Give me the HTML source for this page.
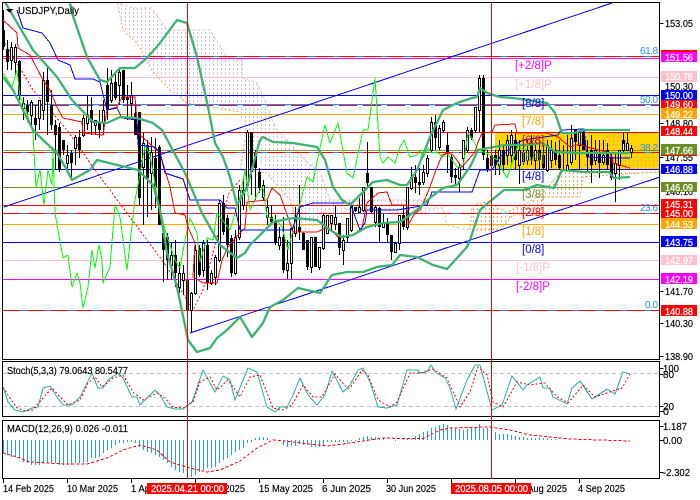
<!DOCTYPE html>
<html><head><meta charset="utf-8"><style>
html,body{margin:0;padding:0;background:#fff}
svg{display:block;font-family:"Liberation Sans",sans-serif}
text{font-size:10px;fill:#000;stroke:#000;stroke-width:.15}
.s text{fill:#fff;stroke:#fff;stroke-width:.25}
.g text{font-size:11.5px;stroke:none}
</style></head><body>
<svg width="700" height="500" viewBox="0 0 700 500" shape-rendering="crispEdges" xmlns="http://www.w3.org/2000/svg">
<defs>
<pattern id="pc" width="4" height="4" patternUnits="userSpaceOnUse"><rect x="1" y="0" width="1" height="2" fill="#D8BFD8"/></pattern>
<pattern id="ps" width="4" height="4" patternUnits="userSpaceOnUse"><rect x="1" y="0" width="1" height="2" fill="#F4A460"/></pattern>
<clipPath id="m"><rect x="3" y="3" width="656" height="357"/></clipPath>
</defs>
<rect width="700" height="500" fill="#fff"/>
<g clip-path="url(#m)">
<rect x="495" y="132" width="165" height="37" fill="#FFD700"/>
<!-- cloud -->
<path d="M118 3L133 8H152L167 30H210L227 57H242V78L257 83L265 100L275 127L308 163L320 172L330 200H423L437 208H443L447 225L440 208L423 215L350 215L300 233L290 200L275 183L267 173L245 140L240 112L187 103L170 90L153 72L137 43L123 30Z" fill="url(#pc)"/>
<path d="M118 3V7L123 30L137 43L153 72L170 90L187 103L240 112" fill="none" stroke="#F4A460" stroke-dasharray="2 2"/>
<path d="M245 140L240 170L267 173L275 183L290 200L300 233" fill="none" stroke="#F4A460" stroke-dasharray="2 2"/>
<path d="M80 3H118L133 8H152L167 30H210L227 57H242V78L257 83L265 100L275 127L308 163L320 172L330 200H423L437 208H443L447 225L467 230L472 222" fill="none" stroke="#D8BFD8" stroke-dasharray="3 2"/>
<path d="M470 230L472 206L480 203L487 202L507 212L527 203L543 193L560 172L580 170L607 137L618 133L630 147H660V172L610 175L583 177L580 197H543V215H513L500 230Z" fill="url(#ps)"/>
<path d="M470 230L472 206L480 203L487 202L507 212L527 203L543 193L560 172L580 170L607 137L618 133L630 147H660M660 172L610 175L583 177L580 197H543V215H513L500 230H470" fill="none" stroke="#F4A460" stroke-dasharray="2 2"/>
<!-- horizontal levels -->
<g fill="none">
<path d="M3 56.5H659" stroke="#1E90FF"/><path d="M3 56.5H659" stroke="#f00" stroke-dasharray="18 6"/>
<path d="M3 58.5H659" stroke="#f0f"/>
<path d="M3 77.5H659" stroke="#FFC0CB"/>
<path d="M3 95.5H659" stroke="#00f"/>
<path d="M3 104.5H659" stroke="#1E90FF"/><path d="M3 105.5H659" stroke="#f00" stroke-dasharray="18 6"/>
<path d="M3 114.5H659" stroke="#FFA500"/>
<path d="M3 132.5H659" stroke="#f00"/>
<path d="M3 150.5H659" stroke="#808000" stroke-opacity=".8"/>
<path d="M3 152.5H659" stroke="#1E90FF"/><path d="M3 152.5H659" stroke="#f00" stroke-dasharray="18 6"/>
<path d="M3 169.5H659" stroke="#00f"/>
<path d="M3 187.5H659" stroke="#6B8E23"/>
<path d="M3 205.5H659" stroke="#f00"/>
<path d="M3 213.5H659" stroke="#1E90FF"/><path d="M3 213.5H659" stroke="#f00" stroke-dasharray="18 6"/>
<path d="M3 224.5H659" stroke="#FFA500"/>
<path d="M3 242.5H659" stroke="#00f"/>
<path d="M3 260.5H659" stroke="#FFC0CB"/>
<path d="M3 279.5H659" stroke="#f0f"/>
<path d="M3 310.5H659" stroke="#1E90FF"/><path d="M3 310.5H659" stroke="#f00" stroke-dasharray="18 6"/>
</g>
<!-- channel -->
<path d="M4 207L612 3M190 333L660 177" stroke="#00f" fill="none"/>
<path d="M3 40L17 63L33 90L67 130L95 170L167 267L193 310L203 290L229 193L240 180" stroke="#f00" fill="none" stroke-dasharray="2 2"/>
<!-- wicks -->
<path stroke="#000" stroke-width="1" fill="none" d="M3.5 10V50M7.5 40V70M11.5 42V70M15.5 44V75M19.5 60V100M23.5 97V120M27.5 100V122M31.5 100V128M35.5 105V140M39.5 100V130M43.5 72V120M47.5 65V135M51.5 90V130M55.5 120V170M59.5 123V172M63.5 140V155M67.5 145V170M71.5 150V180M75.5 135V165M79.5 130V158M83.5 115V137M87.5 95V130M91.5 97V135M95.5 120V135M99.5 110V138M103.5 100V135M107.5 68V120M111.5 70V103M115.5 72V100M119.5 68V105M123.5 70V103M127.5 85V120M131.5 82V120M135.5 105V135M139.5 112V205M143.5 133V225M147.5 140V217M151.5 137V210M155.5 138V208M159.5 145V225M163.5 226V282M167.5 233V280M171.5 243V280M175.5 240V287M179.5 262V293M183.5 265V295M187.5 275V310M191.5 292V333M195.5 245V295M199.5 245V277M203.5 240V277M207.5 240V290M211.5 270V285M215.5 255V285M219.5 200V262M223.5 195V235M227.5 215V257M231.5 235V277M235.5 230V275M239.5 185V240M243.5 178V210M247.5 130V190M251.5 132V195M255.5 150V200M259.5 168V193M263.5 180V200M267.5 200V225M271.5 205V225M275.5 215V245M279.5 227V250M283.5 217V273M287.5 240V279M291.5 228V280M295.5 207V237M299.5 185V240M303.5 232V250M307.5 240V270M311.5 237V273M315.5 237V267M319.5 247V270M323.5 213V250M327.5 215V233M331.5 215V232M335.5 205V230M339.5 223V255M343.5 235V265M347.5 218V243M351.5 205V232M355.5 207V212M359.5 198V212M363.5 187V212M367.5 142V187M371.5 187V213M375.5 205V227M379.5 207V242M383.5 213V228M387.5 218V243M391.5 235V260M395.5 243V252M399.5 215V250M403.5 205V230M407.5 187V230M411.5 167V190M415.5 165V193M419.5 168V195M423.5 165V185M427.5 155V177M431.5 117V153M435.5 115V150M439.5 125V150M443.5 120V133M447.5 133V173M451.5 155V183M455.5 168V185M459.5 163V192M463.5 140V170M467.5 127V152M471.5 128V140M475.5 107V133M479.5 75V132M483.5 75V160M487.5 150V172M491.5 145V170M495.5 150V175M499.5 140V175M503.5 145V173M507.5 135V165M511.5 130V165M515.5 133V170M519.5 140V184M523.5 140V165M527.5 140V165M531.5 135V165M535.5 140V170M539.5 140V170M543.5 145V170M547.5 140V172M551.5 140V168M555.5 142V165M559.5 140V170M563.5 145V170M567.5 135V170M571.5 125V165M575.5 130V160M579.5 130V170M583.5 130V150M587.5 140V172M591.5 135V183M595.5 140V165M599.5 140V178M603.5 140V165M607.5 143V170M611.5 153V180M615.5 153V202M619.5 150V180M623.5 133V152M627.5 132V150M631.5 145V158"/>
<!-- black bodies -->
<path fill="#000" d="M2 30h3v17h-3zM6 49h3v13h-3zM18 61h3v34h-3zM26 105h3v7h-3zM34 118h3v7h-3zM46 80h3v22h-3zM50 105h3v20h-3zM54 125h3v10h-3zM58 127h3v43h-3zM62 140h3v10h-3zM70 153h3v10h-3zM78 137h3v13h-3zM90 110h3v12h-3zM98 123h3v7h-3zM106 85h3v25h-3zM114 82h3v16h-3zM122 70h3v30h-3zM126 97h3v3h-3zM134 113h3v22h-3zM138 112h3v86h-3zM146 145h3v33h-3zM154 158h3v29h-3zM158 147h3v78h-3zM162 233h3v17h-3zM166 237h3v23h-3zM174 255h3v18h-3zM186 280h3v30h-3zM198 248h3v27h-3zM206 245h3v38h-3zM222 203h3v29h-3zM226 218h3v27h-3zM230 238h3v35h-3zM250 132h3v40h-3zM254 153h3v15h-3zM258 172h3v16h-3zM270 217h3v5h-3zM274 222h3v21h-3zM282 237h3v33h-3zM298 227h3v5h-3zM302 233h3v17h-3zM306 240h3v27h-3zM314 237h3v30h-3zM338 223h3v25h-3zM354 207h3v4h-3zM366 173h3v10h-3zM370 187h3v25h-3zM378 208h3v19h-3zM386 223h3v12h-3zM390 235h3v17h-3zM402 215h3v12h-3zM414 177h3v6h-3zM418 182h3v3h-3zM434 122h3v16h-3zM446 145h3v7h-3zM450 157h3v20h-3zM454 175h3v3h-3zM470 130h3v8h-3zM482 78h3v77h-3zM486 158h3v12h-3zM494 155h3v10h-3zM502 150h3v15h-3zM514 140h3v20h-3zM522 153h3v9h-3zM530 143h3v15h-3zM538 150h3v10h-3zM542 155h3v13h-3zM554 150h3v10h-3zM558 155h3v13h-3zM574 130h3v12h-3zM582 132h3v18h-3zM586 153h3v4h-3zM590 150h3v15h-3zM598 153h3v10h-3zM606 150h3v15h-3zM610 157h3v21h-3zM622 140h3v3h-3z"/>
<!-- white bodies -->
<path fill="#fff" stroke="#000" d="M10.5 47.500h2v13h-2zM14.500 47.500h2v15h-2zM22.500 103.500h2v5h-2zM30.500 102.500h2v13h-2zM38.500 100.500h2v18h-2zM42.500 80.500h2v30h-2zM66.500 155.500h2v8h-2zM74.500 137.500h2v11h-2zM82.500 118.500h2v17h-2zM86.500 115.500h2v8h-2zM94.500 120.500h2v5h-2zM102.500 110.500h2v12h-2zM110.500 83.500h2v17h-2zM118.500 72.500h2v13h-2zM130.500 95.500h2v8h-2zM142.500 143.500h2v24h-2zM150.500 152.500h2v21h-2zM170.500 255.500h2v10h-2zM178.500 273.500h2v14h-2zM182.500 273.500h2v7h-2zM190.500 293.500h2v17h-2zM194.500 250.500h2v43h-2zM202.500 243.500h2v27h-2zM210.500 273.500h2v10h-2zM214.500 257.500h2v20h-2zM218.500 203.500h2v57h-2zM234.500 237.500h2v36h-2zM238.500 190.500h2v47h-2zM242.500 190.500h2v15h-2zM246.500 132.500h2v53h-2zM262.500 185.500h2v12h-2zM266.500 207.500h2v10h-2zM278.500 237.500h2v8h-2zM286.500 263.500h2v7h-2zM290.500 228.500h2v35h-2zM294.500 217.500h2v16h-2zM310.500 237.500h2v30h-2zM318.500 247.500h2v20h-2zM322.500 215.500h2v33h-2zM326.500 215.500h2v18h-2zM330.500 215.500h2v8h-2zM334.500 217.500h2v7h-2zM342.500 240.500h2v10h-2zM346.500 218.500h2v19h-2zM350.500 205.500h2v25h-2zM358.500 207.500h2v5h-2zM362.500 187.500h2v23h-2zM374.500 207.500h2v15h-2zM382.500 222.500h2v5h-2zM394.500 243.500h2v9h-2zM398.500 215.500h2v28h-2zM406.500 187.500h2v40h-2zM410.500 177.500h2v11h-2zM422.500 172.500h2v10h-2zM426.500 158.500h2v15h-2zM430.500 122.500h2v28h-2zM438.500 128.500h2v19h-2zM442.500 122.500h2v8h-2zM458.500 167.500h2v11h-2zM462.500 140.500h2v18h-2zM466.500 130.500h2v20h-2zM474.500 107.500h2v23h-2zM478.500 78.500h2v32h-2zM490.500 155.500h2v10h-2zM498.500 150.500h2v15h-2zM506.500 140.500h2v15h-2zM510.500 135.500h2v20h-2zM518.500 150.500h2v15h-2zM526.500 150.500h2v10h-2zM534.500 150.500h2v10h-2zM546.500 145.500h2v25h-2zM550.500 150.500h2v10h-2zM566.500 165.500h2v5h-2zM570.500 138.500h2v24h-2zM578.500 132.500h2v13h-2zM594.500 150.500h2v10h-2zM602.500 155.500h2v7h-2zM614.500 163.500h2v10h-2zM618.500 150.500h2v15h-2zM622.500 143.500h2v7h-2zM626.500 143.500h2v7h-2zM630.500 148.500h2v4h-2z"/>
<g fill="none" stroke-linejoin="round">
<!-- chikou -->
<polyline stroke="#00ff00" points="3,73 12,87 17,70 20,97 25,107 33,133 35,170 36,187 40,170 44,205 48,170 52,185 53,150 55,213 63,258 68,255 72,287 77,273 80,283 83,308 88,287 92,250 95,268 99,245 102,260 103,283 110,267 115,205 120,217 127,270 130,243 135,200 140,175 145,145 150,155 157,195 165,230 170,245 175,260 180,268 185,240 190,218 197,233 200,262 207,238 213,240 217,213 230,230 240,197 245,170 250,210 258,193 263,187 267,217 277,220 282,227 288,250 293,230 307,177 313,182 318,157 325,125 330,143 338,123 347,173 353,178 363,130 368,130 375,78 380,157 383,163 388,157 395,163 400,147 404,140 410,157 417,155 420,150 423,158 428,148 432,153 437,152 443,157 447,153 457,167 463,167 468,133 473,140 478,150 487,153 497,160 507,178 512,163 517,147 527,150"/>
<!-- tenkan -->
<polyline stroke="#f00" points="3,20 17,33 18,48 30,55 43,80 50,90 57,107 63,118 82,122 83,133 103,135 107,110 117,107 122,97 135,97 138,133 160,153 170,187 175,213 185,215 188,227 195,243 193,277 203,283 217,283 222,260 228,247 238,235 245,228 247,202 267,200 272,188 280,195 290,223 293,232 317,232 328,227 338,237 353,235 362,228 367,203 378,193 387,192 392,205 407,205 408,225 415,213 420,210 428,192 435,173 442,155 448,153 453,155 462,167 475,152 478,142 482,133 492,132 495,125 515,124 517,133 547,133 558,137 570,147 580,144 587,147 610,153 613,163 630,168"/>
<!-- kijun -->
<polyline stroke="#00f" points="17,10 23,28 42,33 50,43 58,60 70,65 75,79 93,79 100,82 107,110 117,108 122,118 137,120 138,145 155,147 160,153 165,173 183,179 190,200 220,200 227,208 235,208 240,230 292,230 300,207 313,203 350,203 360,230 365,223 367,210 397,210 427,205 432,192 472,192 480,170 492,170 500,157 514,145 523,140 558,135 561,130 584,129 587,157 612,158 630,158"/>
<!-- bollinger -->
<g stroke="#3CB371" stroke-width="2.3" shape-rendering="auto">
<polyline points="70,3 72,13 87,57 100,80 107,82 120,68 135,68 147,58 160,43 177,20 187,23 197,57 208,107 215,143 223,157 230,177 237,205 247,187 260,140 263,137 273,142 293,143 317,147 325,160 333,187 342,200 350,205 363,192 373,182 387,180 400,185 407,185 417,170 430,137 443,110 457,103 472,98 477,97 480,88 487,93 500,97 513,98 547,103 555,113 562,133 574,133 584,130 630,130"/>
<polyline points="5,2 33,50 57,77 72,100 93,122 107,123 120,117 137,118 153,123 162,130 185,173 202,213 220,245 237,258 245,253 250,245 273,222 293,218 317,220 330,230 342,237 353,235 367,227 383,223 400,222 417,210 430,198 443,188 457,185 470,167 478,150 504,145 527,145 542,143 556,152 574,153 614,153 630,153"/>
<polyline points="3,77 13,90 33,130 43,140 57,153 67,170 72,180 90,170 97,160 117,165 138,170 153,185 160,210 167,253 177,287 188,340 197,352 210,348 217,338 227,330 240,317 252,337 263,323 270,307 283,300 298,288 320,293 332,275 347,272 363,272 377,267 392,265 400,255 417,257 433,265 447,269 467,247 470,240 480,210 488,203 504,190 524,190 537,185 554,188 562,170 584,172 609,172 614,178 630,177"/>
</g>
</g>
</g>
<!-- panels -->
<g fill="none" stroke="#000">
<rect x="2.5" y="2.5" width="657" height="357"/>
<rect x="2.5" y="361.5" width="657" height="55"/>
<rect x="2.5" y="420.5" width="657" height="58"/>
<path d="M659.5 23.5h4M659.5 123.5h4M659.5 157.5h4M659.5 291.5h4M659.5 323.5h4M659.5 356.5h4M659.5 368.5h4M659.5 374.5h4M659.5 406.5h4M659.5 411.5h4M659.5 426.5h4M659.5 440.5h4M659.5 472.5h4M3.5 479v4M67.5 479v4M131.5 479v4M195.5 479v4M259.5 479v4M323.5 479v4M387.5 479v4M451.5 479v4M515.5 479v4M579.5 479v4"/>
</g>
<!-- stochastic -->
<path d="M3 373.500H659M3 406.500H659" stroke="#c0c0c0" stroke-dasharray="4 3" fill="none"/>
<polyline fill="none" stroke="#20B2AA" points="3,387 8,402 15,410 23,412 32,408 38,407 43,388 50,386 57,397 63,405 72,405 80,397 92,373 98,388 103,388 108,380 118,373 123,378 132,397 137,397 140,405 148,397 155,390 160,395 167,407 175,409 183,409 192,402 203,370 215,392 223,376 230,380 235,400 248,368 257,372 267,407 275,412 280,407 287,407 293,395 300,378 308,395 317,405 325,395 332,371 343,392 350,385 358,370 363,368 370,382 378,407 387,408 397,405 407,370 418,370 420,373 427,372 431,365 435,372 445,378 450,388 456,409 467,380 475,365 480,365 492,410 502,405 512,376 523,390 527,385 540,377 543,388 550,388 553,397 567,404 572,388 580,381 592,399 607,389 615,394 623,372 630,374"/>
<polyline fill="none" stroke="#f00" stroke-dasharray="2 2" points="3,387 10,398 17,408 25,411 33,410 43,398 52,388 60,397 68,405 80,400 88,383 95,377 102,387 113,378 123,375 133,392 143,400 157,393 165,398 172,407 183,408 193,402 200,382 210,377 217,390 228,380 240,397 250,377 260,375 273,408 283,410 292,405 303,385 313,397 322,397 335,374 347,388 350,388 362,370 368,375 378,400 390,407 397,402 410,373 420,373 433,369 447,378 453,392 460,407 470,392 478,367 487,375 493,402 503,407 517,382 530,385 545,383 557,397 568,403 583,385 595,397 610,392 622,388 630,374"/>
<!-- macd -->
<path fill="none" stroke="#1DA6DD" d="M3.500 440V453M7.500 440V455M11.500 440V457M15.500 440V457M19.500 440V458M23.500 440V462M27.500 440V463M31.500 440V465M35.500 440V465M39.500 440V465M43.500 440V463M47.500 440V463M51.500 440V463M55.500 440V463M59.500 440V465M63.500 440V465M67.500 440V465M71.500 440V465M75.500 440V463M79.500 440V463M83.500 440V463M87.500 440V462M91.500 440V458M95.500 440V458M99.500 440V457M103.500 440V453M107.500 440V450M111.500 440V448M115.500 440V445M119.500 440V443M123.500 440V443M127.500 440V442M131.500 440V442M135.500 440V443M139.500 440V447M143.500 440V450M147.500 440V452M151.500 440V453M155.500 440V455M159.500 440V457M163.500 440V460M167.500 440V463M171.500 440V467M175.500 440V470M179.500 440V472M183.500 440V473M191.500 440V477M195.500 440V475M199.500 440V472M203.500 440V470M207.500 440V468M211.500 440V468M215.500 440V467M219.500 440V463M223.500 440V460M227.500 440V458M231.500 440V455M235.500 440V452M239.500 440V450M243.500 440V448M247.500 440V443M251.500 440V442M255.500 440V438M259.500 440V437M263.500 440V437M267.500 440V438M279.500 440V441M283.500 440V445M287.500 440V447M291.500 440V446M295.500 440V446M299.500 440V444M303.500 440V445M307.500 440V445M311.500 440V447M315.500 440V447M319.500 440V447M323.500 440V445M327.500 440V442M331.500 440V442M335.500 440V442M339.500 440V442M343.500 440V442M347.500 440V442M351.500 440V441M355.500 440V441M359.500 440V438M363.500 440V437M367.500 440V436M371.500 440V437M375.500 440V437M379.500 440V438M383.500 440V438M395.500 440V441M403.500 440V439M407.500 440V439M411.500 440V439M415.500 440V436M419.500 440V434M423.500 440V432M427.500 440V431M431.500 440V428M435.500 440V427M439.500 440V425M443.500 440V424M447.500 440V425M451.500 440V427M455.500 440V428M459.500 440V429M463.500 440V430M467.500 440V429M471.500 440V428M475.500 440V427M479.500 440V424M483.500 440V428M487.500 440V428M495.500 440V432M499.500 440V434M503.500 440V434M507.500 440V434M511.500 440V435M515.500 440V436M519.500 440V437M523.500 440V437M527.500 440V438M531.500 440V438M535.500 440V438M539.500 440V438M543.500 440V438M547.500 440V438M551.500 440V439M555.500 440V439"/>
<polyline fill="none" stroke="#f00" stroke-dasharray="3 2" points="3,453 17,457 30,462 47,463 67,464 87,464 107,458 123,450 140,445 157,450 170,462 190,468 207,472 220,470 240,461 257,448 273,440 293,442 310,444 327,446 350,443 363,441 383,438 403,438.500 423,438.500 440,430 450,428 490,427 510,430 530,435 550,437 570,439 630,441"/>
<!-- vertical selection lines -->
<path d="M187.500 3V479M491.500 3V479" stroke="#f00" fill="none"/>
<!-- chart text -->
<path d="M6 9h7l-3.500 4z" fill="#000"/>
<text x="18" y="14" textLength="61" lengthAdjust="spacingAndGlyphs">USDJPY,Daily</text>
<text x="7" y="374" textLength="121" lengthAdjust="spacingAndGlyphs">Stoch(5,3,3) 79.0643 80.5477</text>
<text x="7" y="432" textLength="121" lengthAdjust="spacingAndGlyphs">MACD(12,26,9) 0.026 -0.011</text>
<g class="g">
<text x="515" y="69" style="fill:#f0f">[+2/8]P</text>
<text x="515" y="88" style="fill:#FFC0CB">[+1/8]P</text>
<text x="522" y="107" style="fill:#00f">[8/8]</text>
<text x="522" y="125" style="fill:#FFA500">[7/8]</text>
<text x="522" y="144" style="fill:#f00">[6/8]</text>
<text x="522" y="161" style="fill:#6B8E23">[5/8]</text>
<text x="522" y="180" style="fill:#00f">[4/8]</text>
<text x="522" y="198" style="fill:#6B8E23">[3/8]</text>
<text x="522" y="216" style="fill:#f00">[2/8]</text>
<text x="522" y="235" style="fill:#FFA500">[1/8]</text>
<text x="522" y="253" style="fill:#00f">[0/8]</text>
<text x="516" y="271" style="fill:#FFC0CB">[-1/8]P</text>
<text x="516" y="290" style="fill:#f0f">[-2/8]P</text>
</g>
<g>
<text x="640" y="54" style="fill:#1E90FF;stroke:none" textLength="18">61.8</text>
<text x="640" y="103" style="fill:#1E90FF;stroke:none" textLength="18">50.0</text>
<text x="640" y="151" style="fill:#1E90FF;stroke:none" textLength="18">38.2</text>
<text x="640" y="211" style="fill:#1E90FF;stroke:none" textLength="18">23.6</text>
<text x="645" y="308" style="fill:#1E90FF;stroke:none" textLength="13">0.0</text>
</g>
<!-- right scale plain -->
<text x="665" y="27" textLength="28" lengthAdjust="spacingAndGlyphs">153.05</text>
<text x="665" y="90" textLength="28" lengthAdjust="spacingAndGlyphs">150.30</text>
<text x="665" y="127" textLength="28" lengthAdjust="spacingAndGlyphs">148.80</text>
<text x="665" y="161" textLength="28" lengthAdjust="spacingAndGlyphs">147.55</text>
<text x="665" y="195" textLength="28" lengthAdjust="spacingAndGlyphs">146.10</text>
<text x="665" y="295" textLength="28" lengthAdjust="spacingAndGlyphs">141.70</text>
<text x="665" y="327" textLength="28" lengthAdjust="spacingAndGlyphs">140.30</text>
<text x="665" y="360" textLength="28" lengthAdjust="spacingAndGlyphs">138.90</text>
<text x="663" y="372" textLength="16" lengthAdjust="spacingAndGlyphs">100</text>
<text x="663" y="378" textLength="11" lengthAdjust="spacingAndGlyphs">80</text>
<text x="663" y="410" textLength="11" lengthAdjust="spacingAndGlyphs">20</text>
<text x="663" y="415" textLength="6" lengthAdjust="spacingAndGlyphs">0</text>
<text x="663" y="430" textLength="24" lengthAdjust="spacingAndGlyphs">1.187</text>
<text x="663" y="444" textLength="19" lengthAdjust="spacingAndGlyphs">0.00</text>
<text x="663" y="476" textLength="27" lengthAdjust="spacingAndGlyphs">-2.302</text>
<!-- right scale tags -->
<g class="s">
<rect x="661" y="50" width="36" height="2" fill="#f00"/>
<rect x="661" y="52" width="36" height="10" fill="#f0f"/><text x="665" y="61" textLength="28" lengthAdjust="spacingAndGlyphs">151.56</text>
<rect x="661" y="71" width="36" height="11" fill="#FFC0CB"/><text x="665" y="80" textLength="28" lengthAdjust="spacingAndGlyphs">150.78</text>
<rect x="661" y="90" width="36" height="10" fill="#00f"/><text x="665" y="99" textLength="28" lengthAdjust="spacingAndGlyphs">150.00</text>
<rect x="661" y="100" width="36" height="9" fill="#f00"/><text x="665" y="108" textLength="28" lengthAdjust="spacingAndGlyphs">149.60</text>
<rect x="661" y="108" width="36" height="11" fill="#FFA500"/><text x="665" y="118" textLength="28" lengthAdjust="spacingAndGlyphs">149.22</text>
<rect x="661" y="126" width="36" height="10" fill="#f00"/><text x="665" y="135" textLength="28" lengthAdjust="spacingAndGlyphs">148.44</text>
<rect x="661" y="155" width="36" height="1" fill="#f00"/>
<rect x="661" y="144" width="36" height="11" fill="#6B8E23"/><text x="665" y="154" textLength="28" lengthAdjust="spacingAndGlyphs">147.66</text>
<rect x="661" y="164" width="36" height="10" fill="#00f"/><text x="665" y="173" textLength="28" lengthAdjust="spacingAndGlyphs">146.88</text>
<rect x="661" y="182" width="36" height="10" fill="#6B8E23"/><text x="665" y="191" textLength="28" lengthAdjust="spacingAndGlyphs">146.09</text>
<rect x="661" y="208" width="36" height="10" fill="#f00"/><text x="665" y="217" textLength="28" lengthAdjust="spacingAndGlyphs">145.00</text>
<rect x="661" y="199" width="36" height="10" fill="#f00"/><text x="665" y="208" textLength="28" lengthAdjust="spacingAndGlyphs">145.31</text>
<rect x="661" y="218" width="36" height="11" fill="#FFA500"/><text x="665" y="228" textLength="28" lengthAdjust="spacingAndGlyphs">144.53</text>
<rect x="661" y="236" width="36" height="11" fill="#00f"/><text x="665" y="246" textLength="28" lengthAdjust="spacingAndGlyphs">143.75</text>
<rect x="661" y="255" width="36" height="10" fill="#FFC0CB"/><text x="665" y="264" textLength="28" lengthAdjust="spacingAndGlyphs">142.97</text>
<rect x="661" y="273" width="36" height="11" fill="#f0f"/><text x="665" y="283" textLength="28" lengthAdjust="spacingAndGlyphs">142.19</text>
<rect x="661" y="305" width="36" height="11" fill="#f00"/><text x="665" y="315" textLength="28" lengthAdjust="spacingAndGlyphs">140.88</text>
</g>
<!-- time axis -->
<text x="3" y="492" textLength="51" lengthAdjust="spacingAndGlyphs">14 Feb 2025</text>
<text x="67" y="492" textLength="51" lengthAdjust="spacingAndGlyphs">10 Mar 2025</text>
<text x="131" y="492" textLength="46" lengthAdjust="spacingAndGlyphs">1 Apr 2025</text>
<text x="195" y="492" textLength="50" lengthAdjust="spacingAndGlyphs">23 Apr 2025</text>
<text x="259" y="492" textLength="54" lengthAdjust="spacingAndGlyphs">15 May 2025</text>
<text x="322" y="492" textLength="49" lengthAdjust="spacingAndGlyphs">6 Jun 2025</text>
<text x="386" y="492" textLength="50" lengthAdjust="spacingAndGlyphs">30 Jun 2025</text>
<text x="451" y="492" textLength="50" lengthAdjust="spacingAndGlyphs">22 Jul 2025</text>
<text x="515" y="492" textLength="52" lengthAdjust="spacingAndGlyphs">13 Aug 2025</text>
<text x="578" y="492" textLength="47" lengthAdjust="spacingAndGlyphs">4 Sep 2025</text>
<g class="s">
<rect x="147" y="483" width="80" height="11" fill="#f00"/><text x="151" y="492" textLength="73" lengthAdjust="spacingAndGlyphs">2025.04.21 00:00</text>
<rect x="451" y="483" width="80" height="11" fill="#f00"/><text x="455" y="492" textLength="73" lengthAdjust="spacingAndGlyphs">2025.08.05 00:00</text>
</g>
</svg>
</body></html>
